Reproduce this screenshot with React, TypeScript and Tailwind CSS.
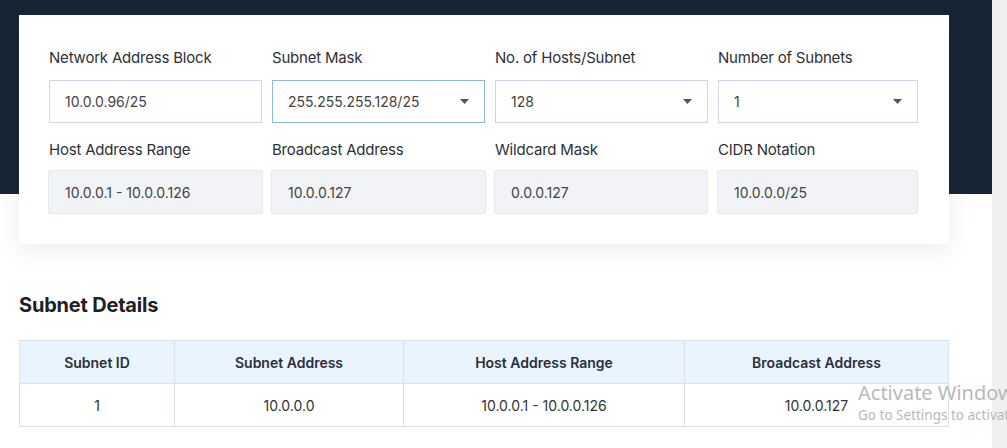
import React from "react";

const Caret = () => (
  <svg width="9" height="5" viewBox="0 0 9 5" className="shrink-0">
    <path d="M0 0 L9 0 L4.5 5 Z" fill="#555" />
  </svg>
);

export default function App() {
  const font = { fontFamily: "Inter, 'Noto Sans', sans-serif" };
  return (
    <div className="flex w-[1007px] h-[448px] overflow-hidden bg-white" style={font}>
      <div className="relative w-[992px] h-full">
        <div className="absolute left-0 top-0 w-[992px] h-[194px] bg-[#172536]" />
        <div className="relative pt-[15px] pl-[19px]">
          <div className="w-[930px] h-[229px] bg-white shadow-[0_6px_24px_rgba(0,0,0,0.08)] pl-[30px] pt-[33px]">
            <div className="flex gap-[10px]">
              <Field label="Network Address Block" w="w-[213px]">
                <div className="h-[43px] border border-[#cdd9e6] flex items-center px-[15px] text-[14px] text-[#444]">10.0.0.96/25</div>
              </Field>
              <Field label="Subnet Mask" w="w-[213px]">
                <div className="h-[43px] border border-[#8ab8ef] flex items-center justify-between pl-[15px] pr-[15px] text-[14px] text-[#444]">
                  <span>255.255.255.128/25</span>
                  <Caret />
                </div>
              </Field>
              <Field label="No. of Hosts/Subnet" w="w-[213px]">
                <div className="h-[43px] border border-[#cdd9e6] flex items-center justify-between pl-[15px] pr-[15px] text-[14px] text-[#444]">
                  <span>128</span>
                  <Caret />
                </div>
              </Field>
              <Field label="Number of Subnets" w="w-[200px]">
                <div className="h-[43px] border border-[#cdd9e6] flex items-center justify-between pl-[15px] pr-[15px] text-[14px] text-[#444]">
                  <span>1</span>
                  <Caret />
                </div>
              </Field>
            </div>
            <div className="flex gap-[8px] mt-[17px] -ml-px">
              <Field2 label="Host Address Range" w="w-[215px]">
                <Ro>10.0.0.1 - 10.0.0.126</Ro>
              </Field2>
              <Field2 label="Broadcast Address" w="w-[215px]">
                <Ro>10.0.0.127</Ro>
              </Field2>
              <Field2 label="Wildcard Mask" w="w-[214px]">
                <Ro>0.0.0.127</Ro>
              </Field2>
              <Field2 label="CIDR Notation" w="w-[201px] ml-px">
                <Ro>10.0.0.0/25</Ro>
              </Field2>
            </div>
          </div>
          <h2 className="mt-[47px] text-[20px] font-bold text-[#1f2024] leading-[28px] tracking-[-0.2px]">Subnet Details</h2>
          <table className="mt-[21px] w-[930px] border-collapse text-[14px]">
            <thead>
              <tr className="bg-[#e9f4fe] h-[43px]">
                <th className="w-[155px] border border-[#dde1e8] font-semibold text-[#2b2f3a]">Subnet ID</th>
                <th className="w-[229px] border border-[#dde1e8] font-semibold text-[#2b2f3a]">Subnet Address</th>
                <th className="w-[281px] border border-[#dde1e8] font-semibold text-[#2b2f3a]">Host Address Range</th>
                <th className="border border-[#dde1e8] font-semibold text-[#2b2f3a]">Broadcast Address</th>
              </tr>
            </thead>
            <tbody>
              <tr className="h-[43px] text-[#333]">
                <td className="border border-[#dde1e8] text-center">1</td>
                <td className="border border-[#dde1e8] text-center">10.0.0.0</td>
                <td className="border border-[#dde1e8] text-center">10.0.0.1 - 10.0.0.126</td>
                <td className="border border-[#dde1e8] text-center">10.0.0.127</td>
              </tr>
            </tbody>
          </table>
        </div>
        <div className="absolute left-[858px] top-[380px] text-[#b9b9b9] whitespace-nowrap" style={{ fontFamily: "'Noto Sans', 'Open Sans', sans-serif" }}>
          <div className="text-[20px] leading-[25px]">Activate Windows</div>
          <div className="text-[13.5px] leading-[20px]">Go to Settings to activate Windows.</div>
        </div>
      </div>
      <div className="w-[15px] h-full bg-[#f0f0f0]" />
    </div>
  );
}

function Field({ label, w, children }: { label: string; w: string; children: React.ReactNode }) {
  return (
    <div className={w}>
      <div className="text-[15px] text-[#2e3138] leading-[20px] mb-[12px] tracking-[-0.2px]">{label}</div>
      {children}
    </div>
  );
}

function Field2({ label, w, children }: { label: string; w: string; children: React.ReactNode }) {
  return (
    <div className={w}>
      <div className="text-[15px] text-[#2e3138] leading-[20px] mb-[10px] ml-px tracking-[-0.2px]">{label}</div>
      {children}
    </div>
  );
}

function Ro({ children }: { children: React.ReactNode }) {
  return (
    <div className="h-[44px] bg-[#f1f3f6] border border-[#e2eaf4] rounded-[2px] flex items-center px-[16px] text-[14px] text-[#444]">{children}</div>
  );
}
